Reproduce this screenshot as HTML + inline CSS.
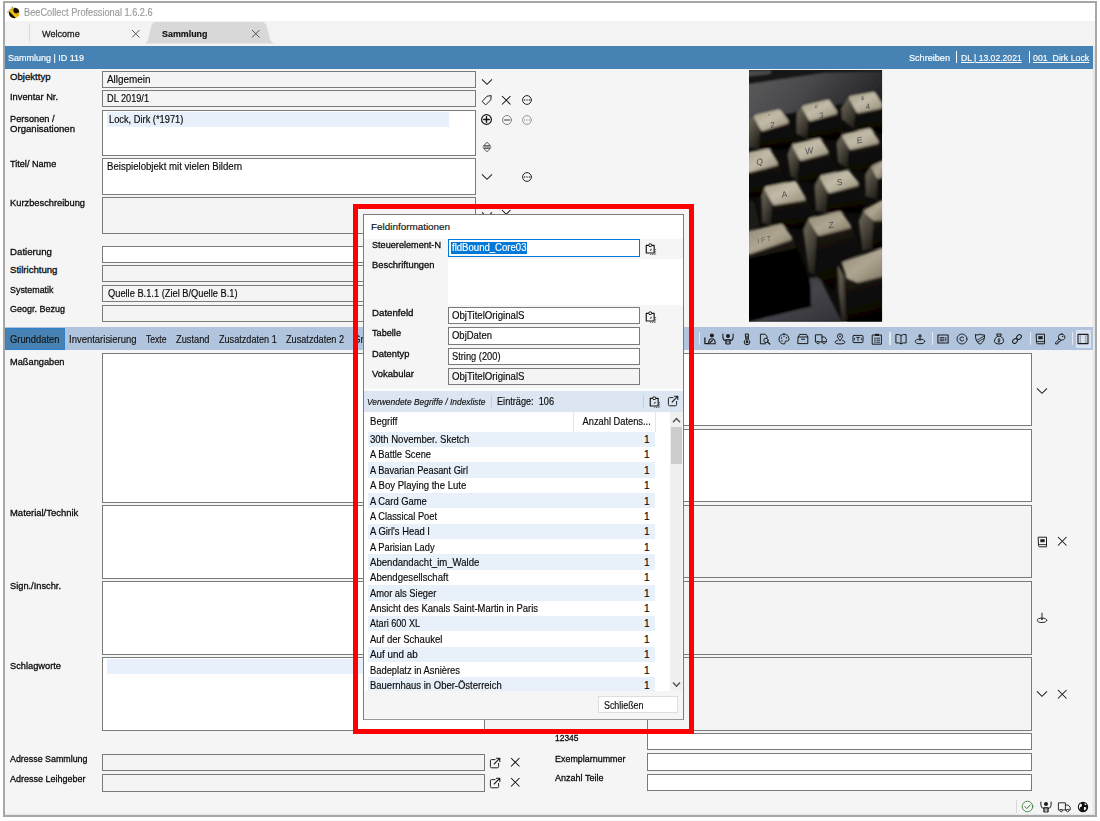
<!DOCTYPE html>
<html lang="de"><head><meta charset="utf-8"><title>BeeCollect Professional 1.6.2.6</title>
<style>

html,body{margin:0;padding:0;background:#fff;}
body{width:1100px;height:821px;overflow:hidden;font-family:"Liberation Sans",sans-serif;}
#app{position:relative;width:1100px;height:821px;overflow:hidden;}
#app div,#app span,#app svg{position:absolute;box-sizing:content-box;}
#app span{white-space:pre;-webkit-text-stroke:0.16px currentColor;}
#app span.lb{-webkit-text-stroke:0.29px currentColor;}
.b{font-weight:bold;}
.i{font-style:italic;}
.u{text-decoration:underline;}
svg{overflow:visible;}

</style></head>
<body>
<div id="app">
<div style="left:3.00px;top:1.00px;width:1090.00px;height:811.50px;background:#f5f5f5;border:2px solid #a9a6a6;box-shadow:inset -2px -1px 2px rgba(0,0,0,.07);"></div>
<div style="left:5.00px;top:3.00px;width:1089.50px;height:18.00px;background:#fff;"></div>
<div style="left:5.00px;top:21.00px;width:1089.50px;height:25.00px;background:#f3f3f3;"></div>
<div style="left:5.00px;top:46.00px;width:1087.50px;height:23.00px;background:#4682b4;"></div>
<svg style="left:7px;top:5.5px" width="14" height="14" viewBox="0 0 14 14"><defs><clipPath id="beec"><circle cx="7.2" cy="6.8" r="5.4"/></clipPath></defs><circle cx="7.2" cy="6.8" r="5.4" fill="#f2bf0a"/><g clip-path="url(#beec)"><g transform="rotate(-45 7.2 6.8)"><rect x="1.2" y="0" width="3.5" height="14" fill="#140e10"/><rect x="7.4" y="0" width="1" height="14" fill="#c79a10"/></g><circle cx="9.4" cy="4.2" r="3" fill="#140e10"/></g><path d="M5 3.6 Q2 3 0.9 5.6 M6.4 2.6 Q6 1.4 5 1" stroke="#aaa" stroke-width="0.8" fill="none"/><circle cx="0.9" cy="5.8" r="0.6" fill="#777"/><circle cx="5.2" cy="1" r="0.6" fill="#555"/></svg>
<span style="top:5.70px;font-size:10.4px;line-height:14px;color:#9a9a9a;left:24.00px;transform-origin:0 50%;transform:scaleX(0.8877);">BeeCollect Professional 1.6.2.6</span>
<div style="left:29.30px;top:23.00px;width:1.00px;height:19.00px;background:#dcdcdc;"></div>
<span class="lb" style="top:27.00px;font-size:9.6px;line-height:14px;color:#222;left:42.30px;transform-origin:0 50%;transform:scaleX(0.9469);">Welcome</span>
<svg style="left:131.25px;top:29.25px" width="9.5" height="9.5" viewBox="0 0 9.5 9.5"><path d="M1 1 L8.5 8.5 M8.5 1 L1 8.5" fill="none" stroke="#444" stroke-width="0.9"/></svg>
<svg style="left:140px;top:21px" width="140" height="24" viewBox="140 21 140 24"><path d="M143 43.6 C148 43.6 148.3 39 150 31 C151.4 24.4 152.2 22 156.5 22 L260.5 22 C265.5 22 266.5 24.5 268 31 C270 39 270.5 43.6 276 43.6 Z" fill="#d8d8d8"/></svg>
<span class="b" style="top:27.00px;font-size:9.6px;line-height:14px;color:#111;left:161.70px;transform-origin:0 50%;transform:scaleX(0.9277);">Sammlung</span>
<svg style="left:250.75px;top:29.25px" width="9.5" height="9.5" viewBox="0 0 9.5 9.5"><path d="M1 1 L8.5 8.5 M8.5 1 L1 8.5" fill="none" stroke="#444" stroke-width="0.9"/></svg>
<span style="top:51.00px;font-size:9.6px;line-height:14px;color:#fff;left:7.80px;transform-origin:0 50%;transform:scaleX(0.9356);">Sammlung | ID 119</span>
<span style="top:51.00px;font-size:9.6px;line-height:14px;color:#fff;left:909.00px;transform-origin:0 50%;transform:scaleX(0.9490);">Schreiben</span>
<div style="left:956.40px;top:50.50px;width:1.00px;height:12.50px;background:#fff;"></div>
<span class="u" style="top:51.00px;font-size:9.6px;line-height:14px;color:#fff;left:961.00px;transform-origin:0 50%;transform:scaleX(0.8959);">DL | 13.02.2021</span>
<div style="left:1028.60px;top:50.50px;width:1.00px;height:12.50px;background:#fff;"></div>
<span class="u" style="top:51.00px;font-size:9.6px;line-height:14px;color:#fff;left:1032.80px;transform-origin:0 50%;transform:scaleX(0.9164);">001_Dirk Lock</span>
<span class="lb" style="top:70.00px;font-size:9.6px;line-height:14px;color:#0a0a0a;left:10.00px;transform-origin:0 50%;">Objekttyp</span>
<div style="left:102.00px;top:71.00px;width:372.00px;height:15.00px;background:#f4f4f4;border:1px solid #7a7a7a;"></div>
<span class="lb" style="top:89.50px;font-size:9.6px;line-height:14px;color:#0a0a0a;left:10.00px;transform-origin:0 50%;transform:scaleX(0.9679);">Inventar Nr.</span>
<div style="left:102.00px;top:90.20px;width:372.00px;height:15.30px;background:#f4f4f4;border:1px solid #7a7a7a;"></div>
<span class="lb" style="top:112.30px;font-size:9.6px;line-height:14px;color:#0a0a0a;left:10.00px;transform-origin:0 50%;transform:scaleX(0.9589);">Personen /</span>
<div style="left:102.00px;top:110.00px;width:372.00px;height:44.00px;background:#fff;border:1px solid #7a7a7a;"></div>
<span class="lb" style="top:156.70px;font-size:9.6px;line-height:14px;color:#0a0a0a;left:10.00px;transform-origin:0 50%;transform:scaleX(0.9507);">Titel/ Name</span>
<div style="left:102.00px;top:158.00px;width:372.00px;height:35.00px;background:#fff;border:1px solid #7a7a7a;"></div>
<span class="lb" style="top:196.00px;font-size:9.6px;line-height:14px;color:#0a0a0a;left:10.00px;transform-origin:0 50%;transform:scaleX(0.9697);">Kurzbeschreibung</span>
<div style="left:102.00px;top:197.30px;width:372.00px;height:34.70px;background:#f4f4f4;border:1px solid #7a7a7a;"></div>
<span class="lb" style="top:245.00px;font-size:9.6px;line-height:14px;color:#0a0a0a;left:10.00px;transform-origin:0 50%;transform:scaleX(1.0094);">Datierung</span>
<div style="left:102.00px;top:246.00px;width:372.00px;height:15.00px;background:#fff;border:1px solid #7a7a7a;"></div>
<span class="lb" style="top:263.30px;font-size:9.6px;line-height:14px;color:#0a0a0a;left:10.00px;transform-origin:0 50%;">Stilrichtung</span>
<div style="left:102.00px;top:265.30px;width:372.00px;height:15.00px;background:#f4f4f4;border:1px solid #7a7a7a;"></div>
<span class="lb" style="top:282.50px;font-size:9.6px;line-height:14px;color:#0a0a0a;left:10.00px;transform-origin:0 50%;transform:scaleX(0.9271);">Systematik</span>
<div style="left:102.00px;top:284.80px;width:372.00px;height:15.20px;background:#f4f4f4;border:1px solid #7a7a7a;"></div>
<span class="lb" style="top:302.30px;font-size:9.6px;line-height:14px;color:#0a0a0a;left:10.00px;transform-origin:0 50%;transform:scaleX(0.9374);">Geogr. Bezug</span>
<div style="left:102.00px;top:304.50px;width:372.00px;height:15.00px;background:#f4f4f4;border:1px solid #7a7a7a;"></div>
<span class="lb" style="top:122.30px;font-size:9.6px;line-height:14px;color:#0a0a0a;left:10.00px;transform-origin:0 50%;transform:scaleX(0.9988);">Organisationen</span>
<div style="left:107.00px;top:112.00px;width:341.50px;height:14.50px;background:#e8f0fb;"></div>
<span style="top:73.00px;font-size:10.2px;line-height:14px;color:#0a0a0a;left:107.20px;transform-origin:0 50%;transform:scaleX(0.9721);">Allgemein</span>
<span style="top:92.30px;font-size:10.2px;line-height:14px;color:#0a0a0a;left:107.20px;transform-origin:0 50%;transform:scaleX(0.9005);">DL 2019/1</span>
<span style="top:112.50px;font-size:10.2px;line-height:14px;color:#0a0a0a;left:108.70px;transform-origin:0 50%;transform:scaleX(0.9113);">Lock, Dirk (*1971)</span>
<span style="top:160.00px;font-size:10.2px;line-height:14px;color:#0a0a0a;left:107.30px;transform-origin:0 50%;transform:scaleX(0.9437);">Beispielobjekt mit vielen Bildern</span>
<span style="top:287.00px;font-size:10.2px;line-height:14px;color:#0a0a0a;left:107.50px;transform-origin:0 50%;transform:scaleX(0.9112);">Quelle B.1.1 (Ziel B/Quelle B.1)</span>
<svg style="left:480.70px;top:77.50px" width="12" height="8" viewBox="0 0 12 8"><path d="M1 1.4 L6 6.3 L11 1.4" fill="none" stroke="#222" stroke-width="1.05"/></svg>
<svg style="left:480.50px;top:94.00px" width="12" height="12" viewBox="0 0 12 12"><path d="M1.4 7.2 L6 2.2 L10.2 1.6 L9.8 5.8 L5 10.6 Z" fill="none" stroke="#222" stroke-width="1.0" stroke-linecap="round" stroke-linejoin="round"/></svg>
<svg style="left:501.25px;top:94.75px" width="10.5" height="10.5" viewBox="0 0 10.5 10.5"><path d="M1 1 L9.5 9.5 M9.5 1 L1 9.5" fill="none" stroke="#151515" stroke-width="1.05"/></svg>
<svg style="left:520.70px;top:94.00px" width="12" height="12" viewBox="0 0 12 12"><circle cx="6" cy="6" r="4.4" fill="none" stroke="#222" stroke-width="1.0" stroke-linecap="round" stroke-linejoin="round"/><circle cx="3.7" cy="6" r="0.68" fill="#222"/><circle cx="6" cy="6" r="0.68" fill="#222"/><circle cx="8.3" cy="6" r="0.68" fill="#222"/></svg>
<svg style="left:480.20px;top:113.00px" width="13" height="13" viewBox="0 0 13 13"><circle cx="6.5" cy="6.5" r="4.9" fill="none" stroke="#111" stroke-width="1.15" stroke-linecap="round" stroke-linejoin="round"/><path d="M3.7 6.5 H9.3 M6.5 3.7 V9.3" fill="none" stroke="#111" stroke-width="1.4" stroke-linecap="round" stroke-linejoin="round"/></svg>
<svg style="left:500.50px;top:113.50px" width="12" height="12" viewBox="0 0 12 12"><circle cx="6" cy="6" r="4.5" fill="none" stroke="#777" stroke-width="0.9" stroke-linecap="round" stroke-linejoin="round"/><path d="M3.4 6 H8.6" fill="none" stroke="#777" stroke-width="1.4" stroke-linecap="round" stroke-linejoin="round"/></svg>
<svg style="left:520.70px;top:113.50px" width="12" height="12" viewBox="0 0 12 12"><circle cx="6" cy="6" r="4.4" fill="none" stroke="#999" stroke-width="1.0" stroke-linecap="round" stroke-linejoin="round"/><circle cx="3.7" cy="6" r="0.68" fill="#999"/><circle cx="6" cy="6" r="0.68" fill="#999"/><circle cx="8.3" cy="6" r="0.68" fill="#999"/></svg>
<svg style="left:481.70px;top:140.50px" width="10" height="12" viewBox="0 0 10 12"><path d="M2 4.3 L5 1.2 L8 4.3 Z M1 6 H9 M2 7.7 L5 10.8 L8 7.7 Z" fill="none" stroke="#222" stroke-width="0.75" stroke-linecap="round" stroke-linejoin="round"/></svg>
<svg style="left:480.70px;top:173.00px" width="12" height="8" viewBox="0 0 12 8"><path d="M1 1.4 L6 6.3 L11 1.4" fill="none" stroke="#222" stroke-width="1.05"/></svg>
<svg style="left:520.70px;top:170.70px" width="12" height="12" viewBox="0 0 12 12"><circle cx="6" cy="6" r="4.4" fill="none" stroke="#222" stroke-width="1.0" stroke-linecap="round" stroke-linejoin="round"/><circle cx="3.7" cy="6" r="0.68" fill="#222"/><circle cx="6" cy="6" r="0.68" fill="#222"/><circle cx="8.3" cy="6" r="0.68" fill="#222"/></svg>
<svg style="left:480.70px;top:210.50px" width="12" height="8" viewBox="0 0 12 8"><path d="M1 1.4 L6 6.3 L11 1.4" fill="none" stroke="#222" stroke-width="1.05"/></svg>
<svg style="left:501.25px;top:208.75px" width="10.5" height="10.5" viewBox="0 0 10.5 10.5"><path d="M1 1 L9.5 9.5 M9.5 1 L1 9.5" fill="none" stroke="#151515" stroke-width="1.05"/></svg>
<svg style="left:749.3px;top:70.3px" width="133.1" height="251.7" viewBox="0 0 133.1 251.7" preserveAspectRatio="none"><defs>
<linearGradient id="kt" x1="0" y1="0" x2="1" y2="1"><stop offset="0" stop-color="#a9a18c"/><stop offset="0.45" stop-color="#c2bba8"/><stop offset="1" stop-color="#9b937e"/></linearGradient>
<linearGradient id="kt2" x1="0" y1="0" x2="1" y2="1"><stop offset="0" stop-color="#948c78"/><stop offset="0.5" stop-color="#aea691"/><stop offset="1" stop-color="#857d69"/></linearGradient>
<linearGradient id="kl" x1="0" y1="0" x2="0.6" y2="1"><stop offset="0" stop-color="#716b5a"/><stop offset="0.5" stop-color="#4f4a40"/><stop offset="1" stop-color="#26231d"/></linearGradient>
<linearGradient id="kf" x1="0" y1="0" x2="0.2" y2="1"><stop offset="0" stop-color="#2a241c"/><stop offset="0.35" stop-color="#120f0b"/><stop offset="1" stop-color="#050403"/></linearGradient>
<linearGradient id="cs" x1="0" y1="0" x2="1" y2="0.4"><stop offset="0" stop-color="#5e5e60"/><stop offset="0.45" stop-color="#4b4b4e"/><stop offset="0.8" stop-color="#323234"/><stop offset="1" stop-color="#232325"/></linearGradient>
<linearGradient id="cb" x1="0" y1="0" x2="1" y2="1"><stop offset="0" stop-color="#2e2e32"/><stop offset="0.5" stop-color="#45454b"/><stop offset="1" stop-color="#303035"/></linearGradient>
<filter id="bl" x="-5%" y="-5%" width="110%" height="110%"><feGaussianBlur stdDeviation="0.9"/></filter>
<filter id="bl2" x="-20%" y="-20%" width="140%" height="140%"><feGaussianBlur stdDeviation="0.35"/></filter>
<clipPath id="pc"><rect x="0" y="0" width="133.1" height="251.7"/></clipPath>
</defs><g clip-path="url(#pc)"><rect x="0" y="0" width="133.1" height="251.7" fill="#0d0c0a"/><g filter="url(#bl)"><polygon points="-4.3,-4.3 138.2,-4.3 138.2,36.9 -4.3,55.9" fill="url(#cs)"/><polygon points="-4.3,-4.3 138.2,-4.3 138.2,1.1 74.9,3.0 -4.3,14.7" fill="#141414"/><polygon points="-1.1,0.5 22.6,0.5 21.1,4.0 -1.1,6.5" fill="#4c4c4c"/><polygon points="-4.3,51.4 93.9,33.7 138.2,27.4 138.2,43.2 -4.3,62.2" fill="#0f0e0c"/><polygon points="106.5,42.0 135.0,36.1 135.0,63.8 105.0,59.0" fill="url(#kf)"/><polygon points="99.4,27.4 106.5,42.0 105.0,59.0 93.1,49.5 92.3,38.5" fill="url(#kl)"/><polygon points="103.2,29.2 125.1,25.6 131.2,35.1 131.3,36.7 109.8,41.2" fill="#5f594a" stroke="#5f594a" stroke-width="5.0" stroke-linejoin="round"/><polygon points="102.4,28.1 124.3,24.5 130.4,34.0 130.5,35.7 109.1,40.1" fill="url(#kt)" stroke="url(#kt)" stroke-width="5.0" stroke-linejoin="round"/><polygon points="59.4,50.3 88.3,42.0 94.7,59.0 90.7,70.1 58.3,68.5" fill="url(#kf)"/><polygon points="52.4,37.2 59.4,50.3 58.3,68.5 47.2,63.8 48.0,43.2" fill="url(#kl)"/><polygon points="56.3,38.7 79.7,33.3 86.0,42.6 62.4,49.2" fill="#5f594a" stroke="#5f594a" stroke-width="5.0" stroke-linejoin="round"/><polygon points="55.5,37.7 78.9,32.3 85.3,41.6 61.6,48.2" fill="url(#kt)" stroke="url(#kt)" stroke-width="5.0" stroke-linejoin="round"/><polygon points="11.2,60.3 39.7,51.4 45.1,65.4 43.2,79.6 10.0,79.6" fill="url(#kf)"/><polygon points="-1.1,51.1 4.4,46.7 11.2,60.3 10.0,78.0 -1.1,78.0" fill="url(#kl)"/><polygon points="8.3,48.2 30.4,42.9 37.4,52.2 14.2,59.1" fill="#5f594a" stroke="#5f594a" stroke-width="5.0" stroke-linejoin="round"/><polygon points="7.5,47.2 29.6,41.9 36.7,51.1 13.4,58.1" fill="url(#kt)" stroke="url(#kt)" stroke-width="5.0" stroke-linejoin="round"/><polygon points="99.4,78.8 130.3,71.4 135.0,81.2 135.0,106.5 98.6,98.6" fill="url(#kf)"/><polygon points="92.6,65.7 99.4,78.8 98.6,98.6 89.1,92.3 87.5,73.3" fill="url(#kl)"/><polygon points="96.5,67.2 120.8,61.8 128.0,72.0 102.5,77.8" fill="#5f594a" stroke="#5f594a" stroke-width="5.0" stroke-linejoin="round"/><polygon points="95.7,66.2 120.0,60.8 127.2,71.0 101.8,76.8" fill="url(#kt)" stroke="url(#kt)" stroke-width="5.0" stroke-linejoin="round"/><polygon points="49.9,89.9 79.6,81.5 87.5,98.6 84.4,116.0 48.8,109.7" fill="url(#kf)"/><polygon points="42.9,75.2 49.9,89.9 48.8,109.7 41.6,106.5 38.5,84.4" fill="url(#kl)"/><polygon points="46.7,76.8 70.6,71.7 77.4,82.1 52.9,88.8" fill="#5f594a" stroke="#5f594a" stroke-width="5.0" stroke-linejoin="round"/><polygon points="45.9,75.8 69.8,70.7 76.6,81.1 52.1,87.7" fill="url(#kt)" stroke="url(#kt)" stroke-width="5.0" stroke-linejoin="round"/><polygon points="-1.9,101.8 29.3,93.6 38.5,112.9 35.3,127.1 -1.9,127.1" fill="url(#kf)"/><polygon points="1.7,85.2 19.8,82.2 27.1,93.9 1.2,100.7" fill="#5f594a" stroke="#5f594a" stroke-width="5.0" stroke-linejoin="round"/><polygon points="0.9,84.1 19.0,81.1 26.3,92.8 0.4,99.7" fill="url(#kt)" stroke="url(#kt)" stroke-width="5.0" stroke-linejoin="round"/><polygon points="122.4,95.8 129.0,109.1 127.9,129.5 116.8,126.3 116.0,105.0" fill="url(#kl)"/><polygon points="125.8,98.4 134.5,94.5 134.0,105.4 130.3,107.0" fill="#5f594a" stroke="#5f594a" stroke-width="5.0" stroke-linejoin="round"/><polygon points="125.0,97.4 133.7,93.5 133.2,104.4 129.5,106.0" fill="url(#kt2)" stroke="url(#kt2)" stroke-width="5.0" stroke-linejoin="round"/><polygon points="78.4,122.4 110.0,113.7 117.6,130.3 112.9,142.9 77.3,142.9" fill="url(#kf)"/><polygon points="70.4,106.9 78.4,122.4 77.3,142.9 67.0,140.6 65.4,116.0" fill="url(#kl)"/><polygon points="74.3,108.5 98.8,103.4 107.7,114.3 81.3,121.2" fill="#5f594a" stroke="#5f594a" stroke-width="5.0" stroke-linejoin="round"/><polygon points="73.5,107.5 98.0,102.4 107.0,113.2 80.5,120.2" fill="url(#kt)" stroke="url(#kt)" stroke-width="5.0" stroke-linejoin="round"/><polygon points="23.0,134.4 56.7,128.7 67.0,144.5 59.0,160.4 21.8,155.6" fill="url(#kf)"/><polygon points="15.0,117.9 23.0,134.4 21.8,155.6 13.1,152.4 12.3,127.1" fill="url(#kl)"/><polygon points="18.8,119.7 46.2,114.5 54.5,128.9 26.1,133.4" fill="#5f594a" stroke="#5f594a" stroke-width="5.0" stroke-linejoin="round"/><polygon points="18.0,118.7 45.4,113.5 53.7,127.9 25.3,132.3" fill="url(#kt)" stroke="url(#kt)" stroke-width="5.0" stroke-linejoin="round"/><polygon points="-1.9,128.7 5.2,131.9 10.8,155.6 -1.9,160.4" fill="#1c1a15"/><polygon points="60.6,208.0 70.1,206.7 93.1,252.3 -1.9,252.3 -1.9,246.0 62.2,236.5" fill="url(#cb)"/><polygon points="124.3,151.0 135.0,149.4 135.0,177.9 123.2,178.7" fill="url(#kf)"/><polygon points="114.5,140.7 124.3,151.0 123.2,178.7 113.7,181.1 109.7,151.0" fill="url(#kl)"/><polygon points="118.3,142.3 134.2,133.8 133.5,148.5 126.1,149.1" fill="#5f594a" stroke="#5f594a" stroke-width="5.0" stroke-linejoin="round"/><polygon points="117.5,141.2 133.4,132.8 132.7,147.4 125.3,148.1" fill="url(#kt2)" stroke="url(#kt2)" stroke-width="5.0" stroke-linejoin="round"/><polygon points="67.8,165.0 102.1,156.1 113.7,182.7 90.7,193.8 84.4,220.7 65.4,204.8" fill="url(#kf)"/><polygon points="59.0,149.8 67.8,165.0 65.4,204.8 59.8,201.7 54.3,160.5" fill="url(#kl)"/><polygon points="62.9,151.3 91.1,144.7 99.8,156.7 70.8,163.9" fill="#5f594a" stroke="#5f594a" stroke-width="5.0" stroke-linejoin="round"/><polygon points="62.1,150.2 90.4,143.7 99.0,155.7 70.0,162.8" fill="url(#kt2)" stroke="url(#kt2)" stroke-width="5.0" stroke-linejoin="round"/><polygon points="-1.9,183.0 43.2,167.6 60.6,208.0 62.2,236.5 -1.9,252.3" fill="url(#kf)"/><polygon points="1.9,164.1 32.8,157.4 40.9,168.6 1.3,182.1" fill="#5f594a" stroke="#5f594a" stroke-width="5.0" stroke-linejoin="round"/><polygon points="1.1,163.1 32.1,156.4 40.1,167.5 0.5,181.1" fill="url(#kt2)" stroke="url(#kt2)" stroke-width="5.0" stroke-linejoin="round"/><polygon points="-1.9,189.0 48.0,177.9 61.4,214.3 62.2,236.5 -1.9,250.8" fill="#050404"/><polygon points="105.0,211.2 135.0,204.8 135.0,252.3 97.8,252.3 94.7,204.8" fill="url(#kf)"/><polygon points="89.1,195.3 94.7,204.8 97.8,249.2 93.1,252.3 89.4,220.7" fill="url(#kl)"/><polygon points="96.4,194.9 133.6,181.9 132.8,204.8 109.4,210.7 100.6,206.9" fill="#5f594a" stroke="#5f594a" stroke-width="5.0" stroke-linejoin="round"/><polygon points="95.6,193.9 132.8,180.9 132.0,203.8 108.6,209.6 99.8,205.9" fill="url(#kt2)" stroke="url(#kt2)" stroke-width="5.0" stroke-linejoin="round"/></g><g filter="url(#bl2)"><text x="0" y="2.7" font-family="Liberation Sans,sans-serif" font-size="7.6" fill="#3c3c44" text-anchor="middle" letter-spacing="0" transform="translate(23.4 54.6) rotate(-12) skewX(-8)" opacity="0.85">2</text><text x="0" y="1.9" font-family="Liberation Sans,sans-serif" font-size="5.5" fill="#3c3c44" text-anchor="middle" letter-spacing="0" transform="translate(20.3 46.1) rotate(-12) skewX(-8)" opacity="0.85">&quot;</text><text x="0" y="2.7" font-family="Liberation Sans,sans-serif" font-size="7.6" fill="#3c3c44" text-anchor="middle" letter-spacing="0" transform="translate(72.5 45.1) rotate(-12) skewX(-8)" opacity="0.85">3</text><text x="0" y="1.9" font-family="Liberation Sans,sans-serif" font-size="5.5" fill="#3c3c44" text-anchor="middle" letter-spacing="0" transform="translate(67.3 36.6) rotate(-12) skewX(-8)" opacity="0.85">#</text><text x="0" y="2.7" font-family="Liberation Sans,sans-serif" font-size="7.6" fill="#3c3c44" text-anchor="middle" letter-spacing="0" transform="translate(118.9 36.4) rotate(-12) skewX(-8)" opacity="0.85">4</text><text x="0" y="1.9" font-family="Liberation Sans,sans-serif" font-size="5.5" fill="#3c3c44" text-anchor="middle" letter-spacing="0" transform="translate(113.7 28.2) rotate(-12) skewX(-8)" opacity="0.85">$</text><text x="0" y="3.0" font-family="Liberation Sans,sans-serif" font-size="8.6" fill="#3c3c44" text-anchor="middle" letter-spacing="0" transform="translate(110.5 70.1) rotate(-12) skewX(-8)" opacity="0.85">E</text><text x="0" y="3.0" font-family="Liberation Sans,sans-serif" font-size="8.6" fill="#3c3c44" text-anchor="middle" letter-spacing="0" transform="translate(60.3 80.6) rotate(-12) skewX(-8)" opacity="0.85">W</text><text x="0" y="3.0" font-family="Liberation Sans,sans-serif" font-size="8.6" fill="#3c3c44" text-anchor="middle" letter-spacing="0" transform="translate(10.8 91.7) rotate(-10) skewX(-8)" opacity="0.85">Q</text><text x="0" y="3.0" font-family="Liberation Sans,sans-serif" font-size="8.6" fill="#3c3c44" text-anchor="middle" letter-spacing="0" transform="translate(90.7 112.2) rotate(-12) skewX(-8)" opacity="0.85">S</text><text x="0" y="3.0" font-family="Liberation Sans,sans-serif" font-size="8.6" fill="#3c3c44" text-anchor="middle" letter-spacing="0" transform="translate(35.3 124.3) rotate(-12) skewX(-8)" opacity="0.85">A</text><text x="0" y="3.0" font-family="Liberation Sans,sans-serif" font-size="8.6" fill="#3c3c44" text-anchor="middle" letter-spacing="0" transform="translate(82.0 155.0) rotate(-12) skewX(-8)" opacity="0.85">Z</text><text x="0" y="2.4" font-family="Liberation Sans,sans-serif" font-size="7" fill="#55534e" text-anchor="middle" letter-spacing="1.8" transform="translate(16.0 169.5) rotate(-13) skewX(-8)" opacity="0.85">IFT</text></g></g></svg>
<div style="left:5.00px;top:327.00px;width:1087.50px;height:23.00px;background:#b0c4de;"></div>
<div style="left:5.00px;top:328.00px;width:60.00px;height:22.00px;background:#4682b4;box-shadow:inset 0 0 0 1px #2f80cf;"></div>
<span style="top:332.50px;font-size:10.2px;line-height:14px;color:#141414;left:10.00px;transform-origin:0 50%;transform:scaleX(0.9199);">Grunddaten</span>
<span style="top:332.50px;font-size:10.2px;line-height:14px;color:#141414;left:69.00px;transform-origin:0 50%;transform:scaleX(0.9310);">Inventarisierung</span>
<span style="top:332.50px;font-size:10.2px;line-height:14px;color:#141414;left:146.00px;transform-origin:0 50%;transform:scaleX(0.8416);">Texte</span>
<span style="top:332.50px;font-size:10.2px;line-height:14px;color:#141414;left:175.50px;transform-origin:0 50%;transform:scaleX(0.9100);">Zustand</span>
<span style="top:332.50px;font-size:10.2px;line-height:14px;color:#141414;left:218.60px;transform-origin:0 50%;transform:scaleX(0.8937);">Zusatzdaten 1</span>
<span style="top:332.50px;font-size:10.2px;line-height:14px;color:#141414;left:285.70px;transform-origin:0 50%;transform:scaleX(0.8984);">Zusatzdaten 2</span>
<span style="top:332.50px;font-size:10.2px;line-height:14px;color:#141414;left:352.50px;transform-origin:0 50%;transform:scaleX(0.9569);">Grafik</span>
<div style="left:698.60px;top:332.20px;width:1.2px;height:13px;background:#e4e9f1"></div>
<svg style="left:704.00px;top:332.80px" width="12" height="12" viewBox="0 0 12 12"><circle cx="7.9" cy="2.5" r="2" fill="#1c1c1c"/><path d="M4.6 10.7 Q4.6 5.8 7.9 5.8 Q11.2 5.8 11.2 10.7 Z" fill="none" stroke="#1c1c1c" stroke-width="1.1" stroke-linecap="round" stroke-linejoin="round"/><path d="M5.8 9.4 L8.4 7.4" fill="none" stroke="#1c1c1c" stroke-width="1.2" stroke-linecap="round" stroke-linejoin="round"/><path d="M0.9 5 V10.6 H4.4" fill="none" stroke="#1c1c1c" stroke-width="1.3" stroke-linecap="round" stroke-linejoin="round"/></svg>
<svg style="left:722.40px;top:332.80px" width="12" height="12" viewBox="0 0 12 12"><circle cx="6" cy="2.9" r="2" fill="#1c1c1c"/><path d="M0.9 1 V4.4 Q1 7 3.8 7.6 M11.1 1 V4.4 Q11 7 8.2 7.6" fill="none" stroke="#1c1c1c" stroke-width="1.1" stroke-linecap="round" stroke-linejoin="round"/><path d="M3.8 6.6 H8.2 V11 H3.8 Z" fill="#1c1c1c" fill-opacity="0.55" stroke="#1c1c1c" stroke-width="0.9"/><path d="M6 8 V11" stroke="#b0c4de" stroke-width="0.8"/></svg>
<svg style="left:740.80px;top:332.80px" width="12" height="12" viewBox="0 0 12 12"><path d="M4.6 1 H7.4 V6.6 Q8.8 7.6 8.8 9 A2.8 2.8 0 0 1 3.2 9 Q3.2 7.6 4.6 6.6 Z" fill="none" stroke="#1c1c1c" stroke-width="1.0" stroke-linecap="round" stroke-linejoin="round"/><circle cx="6" cy="9" r="1.3" fill="#1c1c1c"/><path d="M6 3 V8" fill="none" stroke="#1c1c1c" stroke-width="1.2" stroke-linecap="round" stroke-linejoin="round"/></svg>
<svg style="left:759.30px;top:332.80px" width="12" height="12" viewBox="0 0 12 12"><path d="M6.6 10.8 H1.4 V1.2 H6 L8 3.2 V5" fill="none" stroke="#1c1c1c" stroke-width="1.0" stroke-linecap="round" stroke-linejoin="round"/><circle cx="7" cy="7.4" r="2.2" fill="none" stroke="#1c1c1c" stroke-width="1.0" stroke-linecap="round" stroke-linejoin="round"/><path d="M8.6 9 L10.8 11" fill="none" stroke="#1c1c1c" stroke-width="1.2" stroke-linecap="round" stroke-linejoin="round"/></svg>
<svg style="left:778.10px;top:332.80px" width="12" height="12" viewBox="0 0 12 12"><path d="M6 1 A5 5 0 1 0 6 11 Q7.4 11 7 9.6 Q6.6 8.2 8 8 H9.6 Q11 8 11 6 A5 5 0 0 0 6 1 Z" fill="none" stroke="#1c1c1c" stroke-width="1.0" stroke-linecap="round" stroke-linejoin="round"/><circle cx="3.6" cy="5" r="0.7" fill="#1c1c1c"/><circle cx="6" cy="3.3" r="0.7" fill="#1c1c1c"/><circle cx="8.5" cy="4.8" r="0.7" fill="#1c1c1c"/><circle cx="4" cy="7.8" r="0.7" fill="#1c1c1c"/></svg>
<svg style="left:796.80px;top:332.80px" width="12" height="12" viewBox="0 0 12 12"><path d="M1.2 4 L2.6 1.4 H9.4 L10.8 4 V10.6 H1.2 Z M1.2 4 H10.8 M4.4 6.2 H7.6" fill="none" stroke="#1c1c1c" stroke-width="1.0" stroke-linecap="round" stroke-linejoin="round"/></svg>
<svg style="left:815.40px;top:332.80px" width="12" height="12" viewBox="0 0 12 12"><path d="M0.8 1.8 H7 V9 H0.8 Z M7 4 H9.6 L11.4 6.4 V9 H7" fill="none" stroke="#1c1c1c" stroke-width="1.0" stroke-linecap="round" stroke-linejoin="round"/><circle cx="3" cy="9.6" r="1.2" fill="#b0c4de" stroke="#1c1c1c" stroke-width="0.9"/><circle cx="9" cy="9.6" r="1.2" fill="#b0c4de" stroke="#1c1c1c" stroke-width="0.9"/></svg>
<svg style="left:833.90px;top:332.80px" width="12" height="12" viewBox="0 0 12 12"><path d="M6 7.6 Q3.4 4.8 3.4 3.4 A2.6 2.6 0 0 1 8.6 3.4 Q8.6 4.8 6 7.6 Z" fill="none" stroke="#1c1c1c" stroke-width="1.0" stroke-linecap="round" stroke-linejoin="round"/><circle cx="6" cy="3.4" r="0.8" fill="#1c1c1c"/><path d="M3.4 7.4 Q1 8 1 9.2 Q1 11 6 11 Q11 11 11 9.2 Q11 8 8.6 7.4" fill="none" stroke="#1c1c1c" stroke-width="1.0" stroke-linecap="round" stroke-linejoin="round"/></svg>
<svg style="left:852.20px;top:332.80px" width="12" height="12" viewBox="0 0 12 12"><rect x="1" y="2.4" width="10" height="7.2" rx="1" fill="none" stroke="#1c1c1c" stroke-width="1.0" stroke-linecap="round" stroke-linejoin="round"/><path d="M4.6 4.4 H7.4 M6 4.4 V7.8" fill="none" stroke="#1c1c1c" stroke-width="0.9" stroke-linecap="round" stroke-linejoin="round"/><path d="M2.6 5.2 V6.8 M9.4 5.2 V6.8" fill="none" stroke="#1c1c1c" stroke-width="0.8" stroke-linecap="round" stroke-linejoin="round"/></svg>
<svg style="left:870.80px;top:332.80px" width="12" height="12" viewBox="0 0 12 12"><rect x="1.6" y="2" width="8.8" height="9.2" fill="none" stroke="#1c1c1c" stroke-width="1.0" stroke-linecap="round" stroke-linejoin="round"/><rect x="4" y="0.8" width="4" height="2.2" fill="#1c1c1c"/><path d="M3.4 5.2 H4.4 M5.8 5.2 H8.6 M3.4 7.2 H4.4 M5.8 7.2 H8.6 M3.4 9.2 H4.4 M5.8 9.2 H8.6" fill="none" stroke="#1c1c1c" stroke-width="0.9" stroke-linecap="round" stroke-linejoin="round"/></svg>
<div style="left:889.40px;top:332.20px;width:1.2px;height:13px;background:#e4e9f1"></div>
<svg style="left:894.90px;top:332.80px" width="12" height="12" viewBox="0 0 12 12"><path d="M6 2.4 Q3.6 1 0.9 1.6 V10 Q3.6 9.4 6 10.8 Q8.4 9.4 11.1 10 V1.6 Q8.4 1 6 2.4 V10.8" fill="none" stroke="#1c1c1c" stroke-width="1.0" stroke-linecap="round" stroke-linejoin="round"/></svg>
<svg style="left:913.60px;top:332.80px" width="12" height="12" viewBox="0 0 12 12"><path d="M6 1.4 V7.4 M4.4 3 H7.6" fill="none" stroke="#1c1c1c" stroke-width="1.1" stroke-linecap="round" stroke-linejoin="round"/><ellipse cx="6" cy="8.4" rx="4.7" ry="2.3" fill="none" stroke="#1c1c1c" stroke-width="1.0" stroke-linecap="round" stroke-linejoin="round"/></svg>
<div style="left:931.80px;top:332.20px;width:1.2px;height:13px;background:#e4e9f1"></div>
<svg style="left:936.60px;top:332.80px" width="12" height="12" viewBox="0 0 12 12"><rect x="0.9" y="2" width="10.2" height="8" fill="none" stroke="#1c1c1c" stroke-width="1.1" stroke-linecap="round" stroke-linejoin="round"/><path d="M3 4.6 H7 M3 6.2 H7 M3 7.8 H7 M8.8 4.6 V7.8" fill="none" stroke="#1c1c1c" stroke-width="0.9" stroke-linecap="round" stroke-linejoin="round"/></svg>
<svg style="left:955.60px;top:332.80px" width="12" height="12" viewBox="0 0 12 12"><circle cx="6" cy="6" r="5" fill="none" stroke="#1c1c1c" stroke-width="0.9" stroke-linecap="round" stroke-linejoin="round"/><path d="M7.6 4.6 A2.1 2.1 0 1 0 7.6 7.4" fill="none" stroke="#1c1c1c" stroke-width="1.0" stroke-linecap="round" stroke-linejoin="round"/></svg>
<svg style="left:973.80px;top:332.80px" width="12" height="12" viewBox="0 0 12 12"><path d="M1.4 2 Q6 2 6 1 Q6 2 10.6 2 Q10.8 8.6 6 11.2 Q1.2 8.6 1.4 2 Z" fill="none" stroke="#1c1c1c" stroke-width="1.0" stroke-linecap="round" stroke-linejoin="round"/><path d="M2.6 7.4 L9.6 3.4 M3.6 9 L10 5.4" fill="none" stroke="#1c1c1c" stroke-width="0.8" stroke-linecap="round" stroke-linejoin="round"/></svg>
<svg style="left:992.80px;top:332.80px" width="12" height="12" viewBox="0 0 12 12"><path d="M4.4 3.2 L3.6 1 H8.4 L7.6 3.2 Q11 5.4 10.6 8.6 Q10.2 11 6 11 Q1.8 11 1.4 8.6 Q1 5.4 4.4 3.2 Z M4.4 3.2 H7.6" fill="none" stroke="#1c1c1c" stroke-width="1.0" stroke-linecap="round" stroke-linejoin="round"/><path d="M6 5.2 V9.6 M7 6.2 Q5 5.6 5 6.8 Q5 7.4 6 7.4 Q7 7.4 7 8.2 Q7 9.2 5 8.6" fill="none" stroke="#1c1c1c" stroke-width="0.7" stroke-linecap="round" stroke-linejoin="round"/></svg>
<svg style="left:1011.30px;top:332.80px" width="12" height="12" viewBox="0 0 12 12"><rect x="-2.6" y="-1.9" width="5.2" height="3.8" rx="1.9" transform="translate(4 8) rotate(-45)" fill="none" stroke="#1c1c1c" stroke-width="1.0" stroke-linecap="round" stroke-linejoin="round"/><rect x="-2.6" y="-1.9" width="5.2" height="3.8" rx="1.9" transform="translate(8 4) rotate(-45)" fill="none" stroke="#1c1c1c" stroke-width="1.0" stroke-linecap="round" stroke-linejoin="round"/></svg>
<div style="left:1029.70px;top:332.20px;width:1.2px;height:13px;background:#e4e9f1"></div>
<svg style="left:1035.30px;top:332.80px" width="11" height="12" viewBox="0 0 11 12"><path d="M1.5 1.2 H9.5 V10.8 H2.7 Q1.5 10.8 1.5 9.6 Z" fill="none" stroke="#1c1c1c" stroke-width="1.0" stroke-linecap="round" stroke-linejoin="round"/><path d="M1.6 8.6 H9.4" fill="none" stroke="#1c1c1c" stroke-width="0.9" stroke-linecap="round" stroke-linejoin="round"/><rect x="3.3" y="3.2" width="4.4" height="3" fill="#1c1c1c"/></svg>
<svg style="left:1053.50px;top:332.80px" width="12" height="12" viewBox="0 0 12 12"><path d="M7.9 1 A3.1 3.1 0 1 1 5.3 5.9 L1.6 9.6 V11 H3.6 V9.8 H4.8 V8.6 H6 L6.9 7.2 A3.1 3.1 0 0 1 7.9 1 Z" fill="none" stroke="#1c1c1c" stroke-width="0.95" stroke-linecap="round" stroke-linejoin="round"/><circle cx="8.6" cy="3.4" r="0.7" fill="#1c1c1c"/></svg>
<div style="left:1071.70px;top:332.20px;width:1.2px;height:13px;background:#e4e9f1"></div>
<div style="left:1075.5px;top:330.20px;width:15px;height:17.4px;background:#d7e1ef"></div>
<svg style="left:1076.90px;top:332.80px" width="12" height="12" viewBox="0 0 12 12"><rect x="1" y="1.4" width="10" height="9.2" fill="none" stroke="#1c1c1c" stroke-width="1.1" stroke-linecap="round" stroke-linejoin="round"/><path d="M3.2 1.4 V10.6 M8.8 1.4 V10.6" fill="none" stroke="#1c1c1c" stroke-width="0.8" stroke-dasharray="1 1"/></svg>
<span class="lb" style="top:354.70px;font-size:9.6px;line-height:14px;color:#0a0a0a;left:10.00px;transform-origin:0 50%;transform:scaleX(0.9638);">Maßangaben</span>
<div style="left:102.00px;top:352.50px;width:381.00px;height:148.00px;background:#fff;border:1px solid #7a7a7a;"></div>
<span class="lb" style="top:506.20px;font-size:9.6px;line-height:14px;color:#0a0a0a;left:10.00px;transform-origin:0 50%;transform:scaleX(0.9852);">Material/Technik</span>
<div style="left:102.00px;top:504.50px;width:381.00px;height:72.00px;background:#fff;border:1px solid #7a7a7a;"></div>
<span class="lb" style="top:579.00px;font-size:9.6px;line-height:14px;color:#0a0a0a;left:10.00px;transform-origin:0 50%;transform:scaleX(0.9660);">Sign./Inschr.</span>
<div style="left:102.00px;top:581.00px;width:381.00px;height:71.50px;background:#fff;border:1px solid #7a7a7a;"></div>
<span class="lb" style="top:658.70px;font-size:9.6px;line-height:14px;color:#0a0a0a;left:10.00px;transform-origin:0 50%;transform:scaleX(0.9660);">Schlagworte</span>
<div style="left:102.00px;top:656.50px;width:381.00px;height:72.00px;background:#fff;border:1px solid #7a7a7a;"></div>
<span class="lb" style="top:752.00px;font-size:9.6px;line-height:14px;color:#0a0a0a;left:10.00px;transform-origin:0 50%;transform:scaleX(0.9257);">Adresse Sammlung</span>
<div style="left:102.00px;top:753.50px;width:381.00px;height:15.20px;background:#f4f4f4;border:1px solid #7a7a7a;"></div>
<span class="lb" style="top:772.30px;font-size:9.6px;line-height:14px;color:#0a0a0a;left:10.00px;transform-origin:0 50%;transform:scaleX(0.9373);">Adresse Leihgeber</span>
<div style="left:102.00px;top:774.00px;width:381.00px;height:15.50px;background:#f4f4f4;border:1px solid #7a7a7a;"></div>
<div style="left:107.00px;top:659.00px;width:373.00px;height:14.50px;background:#e8f0fb;"></div>
<svg style="left:489.30px;top:756.50px" width="12" height="12" viewBox="0 0 12 12"><path d="M6 2.6 H2.6 Q1.4 2.6 1.4 3.8 V9.6 Q1.4 10.8 2.6 10.8 H8.4 Q9.6 10.8 9.6 9.6 V6.4" fill="none" stroke="#222" stroke-width="1.0" stroke-linecap="round" stroke-linejoin="round"/><path d="M5.2 7 L10.6 1.4 M7.4 1.2 H10.8 V4.6" fill="none" stroke="#222" stroke-width="1.1" stroke-linecap="round" stroke-linejoin="round"/></svg>
<svg style="left:510.45px;top:757.25px" width="10.5" height="10.5" viewBox="0 0 10.5 10.5"><path d="M1 1 L9.5 9.5 M9.5 1 L1 9.5" fill="none" stroke="#151515" stroke-width="1.05"/></svg>
<svg style="left:489.30px;top:776.70px" width="12" height="12" viewBox="0 0 12 12"><path d="M6 2.6 H2.6 Q1.4 2.6 1.4 3.8 V9.6 Q1.4 10.8 2.6 10.8 H8.4 Q9.6 10.8 9.6 9.6 V6.4" fill="none" stroke="#222" stroke-width="1.0" stroke-linecap="round" stroke-linejoin="round"/><path d="M5.2 7 L10.6 1.4 M7.4 1.2 H10.8 V4.6" fill="none" stroke="#222" stroke-width="1.1" stroke-linecap="round" stroke-linejoin="round"/></svg>
<svg style="left:510.45px;top:777.45px" width="10.5" height="10.5" viewBox="0 0 10.5 10.5"><path d="M1 1 L9.5 9.5 M9.5 1 L1 9.5" fill="none" stroke="#151515" stroke-width="1.05"/></svg>
<div style="left:647.00px;top:352.50px;width:382.70px;height:71.70px;background:#fff;border:1px solid #7a7a7a;"></div>
<div style="left:647.00px;top:428.60px;width:382.70px;height:71.60px;background:#fff;border:1px solid #7a7a7a;"></div>
<div style="left:647.00px;top:504.60px;width:382.70px;height:71.60px;background:#f4f4f4;border:1px solid #7a7a7a;"></div>
<div style="left:647.00px;top:580.50px;width:382.70px;height:72.00px;background:#f4f4f4;border:1px solid #7a7a7a;"></div>
<div style="left:647.00px;top:656.50px;width:382.70px;height:72.00px;background:#f4f4f4;border:1px solid #7a7a7a;"></div>
<div style="left:647.00px;top:732.50px;width:382.70px;height:15.70px;background:#fff;border:1px solid #7a7a7a;"></div>
<div style="left:647.00px;top:753.30px;width:382.70px;height:15.40px;background:#fff;border:1px solid #7a7a7a;"></div>
<div style="left:647.00px;top:773.80px;width:382.70px;height:15.70px;background:#fff;border:1px solid #7a7a7a;"></div>
<span class="lb" style="top:731.30px;font-size:9.6px;line-height:14px;color:#0a0a0a;left:555.00px;transform-origin:0 50%;transform:scaleX(0.8806);">12345</span>
<span class="lb" style="top:751.50px;font-size:9.6px;line-height:14px;color:#0a0a0a;left:555.00px;transform-origin:0 50%;transform:scaleX(0.9311);">Exemplarnummer</span>
<span class="lb" style="top:771.20px;font-size:9.6px;line-height:14px;color:#0a0a0a;left:555.00px;transform-origin:0 50%;transform:scaleX(0.9406);">Anzahl Teile</span>
<svg style="left:1036.30px;top:386.50px" width="12" height="8" viewBox="0 0 12 8"><path d="M1 1.4 L6 6.3 L11 1.4" fill="none" stroke="#222" stroke-width="1.05"/></svg>
<svg style="left:1037.00px;top:535.50px" width="11" height="12" viewBox="0 0 11 12"><path d="M1.5 1.2 H9.5 V10.8 H2.7 Q1.5 10.8 1.5 9.6 Z" fill="none" stroke="#222" stroke-width="1.0" stroke-linecap="round" stroke-linejoin="round"/><path d="M1.6 8.6 H9.4" fill="none" stroke="#222" stroke-width="0.9" stroke-linecap="round" stroke-linejoin="round"/><rect x="3.3" y="3.2" width="4.4" height="3" fill="#222"/></svg>
<svg style="left:1057.35px;top:536.25px" width="10.5" height="10.5" viewBox="0 0 10.5 10.5"><path d="M1 1 L9.5 9.5 M9.5 1 L1 9.5" fill="none" stroke="#151515" stroke-width="1.05"/></svg>
<svg style="left:1036.30px;top:612.00px" width="12" height="12" viewBox="0 0 12 12"><path d="M6 1.2 V7.6" fill="none" stroke="#222" stroke-width="1.0" stroke-linecap="round" stroke-linejoin="round"/><path d="M4.9 6.4 L6 8 L7.1 6.4 Z" fill="#222"/><ellipse cx="6" cy="8.3" rx="4.7" ry="2.2" fill="none" stroke="#222" stroke-width="0.95" stroke-linecap="round" stroke-linejoin="round"/></svg>
<svg style="left:1036.30px;top:690.00px" width="12" height="8" viewBox="0 0 12 8"><path d="M1 1.4 L6 6.3 L11 1.4" fill="none" stroke="#222" stroke-width="1.05"/></svg>
<svg style="left:1057.35px;top:688.75px" width="10.5" height="10.5" viewBox="0 0 10.5 10.5"><path d="M1 1 L9.5 9.5 M9.5 1 L1 9.5" fill="none" stroke="#151515" stroke-width="1.05"/></svg>
<div style="left:1015.80px;top:800.00px;width:1.20px;height:12.50px;background:#d8d8d8;"></div>
<svg style="left:1021.10px;top:800.00px" width="13" height="13" viewBox="0 0 13 13"><circle cx="6.5" cy="6.5" r="5.3" fill="none" stroke="#3b7f3b" stroke-width="0.9" stroke-linecap="round" stroke-linejoin="round"/><path d="M3.8 6.6 L5.8 8.6 L9.4 4.8" fill="none" stroke="#3b7f3b" stroke-width="1.0" stroke-linecap="round" stroke-linejoin="round"/></svg>
<svg style="left:1039.60px;top:800.50px" width="12" height="12" viewBox="0 0 12 12"><circle cx="6" cy="2.9" r="2" fill="#1c1c1c"/><path d="M0.9 1 V4.4 Q1 7 3.8 7.6 M11.1 1 V4.4 Q11 7 8.2 7.6" fill="none" stroke="#1c1c1c" stroke-width="1.0" stroke-linecap="round" stroke-linejoin="round"/><path d="M3.8 6.6 H8.2 V11 H3.8 Z" fill="#1c1c1c" fill-opacity="0.55" stroke="#1c1c1c" stroke-width="0.9"/><path d="M6 8 V11" stroke="#f5f5f5" stroke-width="0.8"/></svg>
<svg style="left:1057.50px;top:800.50px" width="13" height="12" viewBox="0 0 13 12"><path d="M0.8 1.8 H7.4 V9 H0.8 Z M7.4 4 H10.2 L12.2 6.4 V9 H7.4" fill="none" stroke="#1c1c1c" stroke-width="0.9" stroke-linecap="round" stroke-linejoin="round"/><circle cx="3.2" cy="9.6" r="1.2" fill="#f5f5f5" stroke="#1c1c1c" stroke-width="0.9"/><circle cx="9.6" cy="9.6" r="1.2" fill="#f5f5f5" stroke="#1c1c1c" stroke-width="0.9"/></svg>
<svg style="left:1077.00px;top:800.50px" width="12" height="12" viewBox="0 0 12 12"><circle cx="6" cy="6" r="5.2" fill="#111"/><path d="M3.4 2.6 Q5.4 3.2 5 4.8 Q4.6 6 3 6.2 Q2.4 7.6 3.6 9 Q2 8 1.8 6 Q1.8 4 3.4 2.6 Z M7 6 Q8.6 5.6 9.4 6.8 Q9 8.8 7.4 9.6 Q6.6 8 7 6 Z M7.6 2 Q9 2.6 9.6 3.8 Q8.4 4.2 7.6 3.4 Z" fill="#f5f5f5"/></svg>
<div style="left:353.00px;top:204.00px;width:331.30px;height:520.00px;border:5px solid #ff0000;"></div>
<div style="left:363.00px;top:214.00px;width:319.30px;height:504.30px;background:#f5f5f5;border:1px solid #7c7c7c;border-bottom-color:#999;"></div>
<div style="left:364.00px;top:215.00px;width:319.30px;height:24.30px;background:#fff;"></div>
<span style="top:220.20px;font-size:9.9px;line-height:14px;color:#111;left:371.00px;transform-origin:0 50%;">Feldinformationen</span>
<span class="lb" style="top:238.00px;font-size:9.6px;line-height:14px;color:#0a0a0a;left:371.70px;transform-origin:0 50%;transform:scaleX(0.9513);">Steuerelement-N</span>
<div style="left:447.50px;top:239.40px;width:190.70px;height:15.30px;background:#fff;border:1px solid #0078d7;"></div>
<div style="left:451.30px;top:242.40px;width:75.60px;height:11.40px;background:#0078d7;"></div>
<span style="top:241.20px;font-size:10.2px;line-height:14px;color:#fff;left:452.00px;transform-origin:0 50%;transform:scaleX(0.9395);">fldBound_Core03</span>
<svg style="left:644.90px;top:243.10px" width="12" height="13" viewBox="0 0 12 13"><rect x="1.25" y="2.3" width="7.9" height="7.7" fill="none" stroke="#111" stroke-width="1.15" stroke-linecap="round" stroke-linejoin="round"/><path d="M3.6 2.3 Q3.6 0.8 5.2 0.8 Q6.8 0.8 6.8 2.3 Q6.8 3.6 5.2 3.6 Q3.6 3.6 3.6 2.3 Z" fill="#f5f5f5" stroke="#111" stroke-width="1.0"/><path d="M5.6 6.4 H7 M5.6 6.4 V8" fill="none" stroke="#555" stroke-width="0.9"/><path d="M10.6 6 V11.6 M5.2 11.5 H10.8" fill="none" stroke="#555" stroke-width="0.9" stroke-dasharray="1 0.8"/></svg>
<span class="lb" style="top:258.00px;font-size:9.6px;line-height:14px;color:#0a0a0a;left:371.70px;transform-origin:0 50%;transform:scaleX(0.9766);">Beschriftungen</span>
<div style="left:447.50px;top:258.80px;width:235.80px;height:45.80px;background:#fff;"></div>
<span class="lb" style="top:305.50px;font-size:9.6px;line-height:14px;color:#0a0a0a;left:371.70px;transform-origin:0 50%;transform:scaleX(1.0103);">Datenfeld</span>
<div style="left:447.50px;top:307.20px;width:190.70px;height:15.20px;background:#fff;border:1px solid #7a7a7a;"></div>
<span style="top:309.10px;font-size:10.2px;line-height:14px;color:#0a0a0a;left:452.30px;transform-origin:0 50%;transform:scaleX(0.9462);">ObjTitelOriginalS</span>
<span class="lb" style="top:326.10px;font-size:9.6px;line-height:14px;color:#0a0a0a;left:371.70px;transform-origin:0 50%;transform:scaleX(0.9538);">Tabelle</span>
<div style="left:447.50px;top:327.30px;width:190.70px;height:15.30px;background:#fff;border:1px solid #7a7a7a;"></div>
<span style="top:329.25px;font-size:10.2px;line-height:14px;color:#0a0a0a;left:452.30px;transform-origin:0 50%;transform:scaleX(0.9292);">ObjDaten</span>
<span class="lb" style="top:346.60px;font-size:9.6px;line-height:14px;color:#0a0a0a;left:371.70px;transform-origin:0 50%;transform:scaleX(0.9764);">Datentyp</span>
<div style="left:447.50px;top:347.60px;width:190.70px;height:15.40px;background:#fff;border:1px solid #7a7a7a;"></div>
<span style="top:349.60px;font-size:10.2px;line-height:14px;color:#0a0a0a;left:452.30px;transform-origin:0 50%;transform:scaleX(0.9111);">String (200)</span>
<span class="lb" style="top:366.70px;font-size:9.6px;line-height:14px;color:#0a0a0a;left:371.70px;transform-origin:0 50%;transform:scaleX(0.9843);">Vokabular</span>
<div style="left:447.50px;top:367.80px;width:190.70px;height:15.50px;background:#f4f4f4;border:1px solid #7a7a7a;"></div>
<span style="top:369.85px;font-size:10.2px;line-height:14px;color:#0a0a0a;left:452.30px;transform-origin:0 50%;transform:scaleX(0.9462);">ObjTitelOriginalS</span>
<svg style="left:644.90px;top:310.50px" width="12" height="13" viewBox="0 0 12 13"><rect x="1.25" y="2.3" width="7.9" height="7.7" fill="none" stroke="#111" stroke-width="1.15" stroke-linecap="round" stroke-linejoin="round"/><path d="M3.6 2.3 Q3.6 0.8 5.2 0.8 Q6.8 0.8 6.8 2.3 Q6.8 3.6 5.2 3.6 Q3.6 3.6 3.6 2.3 Z" fill="#f5f5f5" stroke="#111" stroke-width="1.0"/><path d="M5.6 6.4 H7 M5.6 6.4 V8" fill="none" stroke="#555" stroke-width="0.9"/><path d="M10.6 6 V11.6 M5.2 11.5 H10.8" fill="none" stroke="#555" stroke-width="0.9" stroke-dasharray="1 0.8"/></svg>
<div style="left:364.00px;top:388.00px;width:319.30px;height:3.20px;background:#fbfbfb;"></div>
<div style="left:364.00px;top:391.10px;width:319.30px;height:20.50px;background:#dce6f2;"></div>
<span class="i" style="top:394.80px;font-size:9.2px;line-height:14px;color:#111;left:367.00px;transform-origin:0 50%;transform:scaleX(0.9158);">Verwendete Begriffe / Indexliste</span>
<div style="left:491.40px;top:395.00px;width:1.00px;height:12.50px;background:#c3cede;"></div>
<span style="top:394.80px;font-size:10.2px;line-height:14px;color:#0a0a0a;left:496.70px;transform-origin:0 50%;transform:scaleX(0.8985);">Einträge:  106</span>
<div style="left:643.40px;top:395.00px;width:1.00px;height:12.50px;background:#c3cede;"></div>
<svg style="left:649.00px;top:395.50px" width="12" height="13" viewBox="0 0 12 13"><rect x="1.25" y="2.3" width="7.9" height="7.7" fill="none" stroke="#111" stroke-width="1.15" stroke-linecap="round" stroke-linejoin="round"/><path d="M3.6 2.3 Q3.6 0.8 5.2 0.8 Q6.8 0.8 6.8 2.3 Q6.8 3.6 5.2 3.6 Q3.6 3.6 3.6 2.3 Z" fill="#f5f5f5" stroke="#111" stroke-width="1.0"/><path d="M5.6 6.4 H7 M5.6 6.4 V8" fill="none" stroke="#555" stroke-width="0.9"/><path d="M10.6 6 V11.6 M5.2 11.5 H10.8" fill="none" stroke="#555" stroke-width="0.9" stroke-dasharray="1 0.8"/></svg>
<svg style="left:667.30px;top:395.20px" width="12" height="12" viewBox="0 0 12 12"><path d="M6 2.6 H2.6 Q1.4 2.6 1.4 3.8 V9.6 Q1.4 10.8 2.6 10.8 H8.4 Q9.6 10.8 9.6 9.6 V6.4" fill="none" stroke="#222" stroke-width="1.0" stroke-linecap="round" stroke-linejoin="round"/><path d="M5.2 7 L10.6 1.4 M7.4 1.2 H10.8 V4.6" fill="none" stroke="#222" stroke-width="1.1" stroke-linecap="round" stroke-linejoin="round"/></svg>
<div style="left:364.00px;top:411.60px;width:306.30px;height:279.40px;background:#fff;"></div>
<div style="left:573.00px;top:411.60px;width:1.00px;height:20.00px;background:#e6e6e6;"></div>
<div style="left:654.80px;top:411.60px;width:1.00px;height:20.00px;background:#e6e6e6;"></div>
<span style="top:414.60px;font-size:10.2px;line-height:14px;color:#0a0a0a;left:369.50px;transform-origin:0 50%;transform:scaleX(0.9397);">Begriff</span>
<span style="top:414.60px;font-size:10.2px;line-height:14px;color:#0a0a0a;right:449.70px;transform-origin:100% 50%;transform:scaleX(0.9124);">Anzahl Datens...</span>
<div style="left:367.70px;top:431.60px;width:287.20px;height:15.36px;background:#e8f0fa;"></div>
<span style="top:433.10px;font-size:10.2px;line-height:14px;color:#0a0a0a;left:369.50px;transform-origin:0 50%;transform:scaleX(0.9367);">30th November. Sketch</span>
<span style="top:433.10px;font-size:10.2px;line-height:14px;color:#0a0a0a;right:450.40px;transform-origin:100% 50%;">1</span>
<span style="top:448.46px;font-size:10.2px;line-height:14px;color:#0a0a0a;left:369.50px;transform-origin:0 50%;transform:scaleX(0.9126);">A Battle Scene</span>
<span style="top:448.46px;font-size:10.2px;line-height:14px;color:#0a0a0a;right:450.40px;transform-origin:100% 50%;">1</span>
<div style="left:367.70px;top:462.32px;width:287.20px;height:15.36px;background:#e8f0fa;"></div>
<span style="top:463.82px;font-size:10.2px;line-height:14px;color:#0a0a0a;left:369.50px;transform-origin:0 50%;transform:scaleX(0.9060);">A Bavarian Peasant Girl</span>
<span style="top:463.82px;font-size:10.2px;line-height:14px;color:#0a0a0a;right:450.40px;transform-origin:100% 50%;">1</span>
<span style="top:479.18px;font-size:10.2px;line-height:14px;color:#0a0a0a;left:369.50px;transform-origin:0 50%;transform:scaleX(0.9394);">A Boy Playing the Lute</span>
<span style="top:479.18px;font-size:10.2px;line-height:14px;color:#0a0a0a;right:450.40px;transform-origin:100% 50%;">1</span>
<div style="left:367.70px;top:493.04px;width:287.20px;height:15.36px;background:#e8f0fa;"></div>
<span style="top:494.54px;font-size:10.2px;line-height:14px;color:#0a0a0a;left:369.50px;transform-origin:0 50%;transform:scaleX(0.9203);">A Card Game</span>
<span style="top:494.54px;font-size:10.2px;line-height:14px;color:#0a0a0a;right:450.40px;transform-origin:100% 50%;">1</span>
<span style="top:509.90px;font-size:10.2px;line-height:14px;color:#0a0a0a;left:369.50px;transform-origin:0 50%;transform:scaleX(0.9100);">A Classical Poet</span>
<span style="top:509.90px;font-size:10.2px;line-height:14px;color:#0a0a0a;right:450.40px;transform-origin:100% 50%;">1</span>
<div style="left:367.70px;top:523.76px;width:287.20px;height:15.36px;background:#e8f0fa;"></div>
<span style="top:525.26px;font-size:10.2px;line-height:14px;color:#0a0a0a;left:369.50px;transform-origin:0 50%;transform:scaleX(0.9260);">A Girl&#x27;s Head I</span>
<span style="top:525.26px;font-size:10.2px;line-height:14px;color:#0a0a0a;right:450.40px;transform-origin:100% 50%;">1</span>
<span style="top:540.62px;font-size:10.2px;line-height:14px;color:#0a0a0a;left:369.50px;transform-origin:0 50%;transform:scaleX(0.9125);">A Parisian Lady</span>
<span style="top:540.62px;font-size:10.2px;line-height:14px;color:#0a0a0a;right:450.40px;transform-origin:100% 50%;">1</span>
<div style="left:367.70px;top:554.48px;width:287.20px;height:15.36px;background:#e8f0fa;"></div>
<span style="top:555.98px;font-size:10.2px;line-height:14px;color:#0a0a0a;left:369.50px;transform-origin:0 50%;transform:scaleX(0.9407);">Abendandacht_im_Walde</span>
<span style="top:555.98px;font-size:10.2px;line-height:14px;color:#0a0a0a;right:450.40px;transform-origin:100% 50%;">1</span>
<span style="top:571.34px;font-size:10.2px;line-height:14px;color:#0a0a0a;left:369.50px;transform-origin:0 50%;transform:scaleX(0.9404);">Abendgesellschaft</span>
<span style="top:571.34px;font-size:10.2px;line-height:14px;color:#0a0a0a;right:450.40px;transform-origin:100% 50%;">1</span>
<div style="left:367.70px;top:585.20px;width:287.20px;height:15.36px;background:#e8f0fa;"></div>
<span style="top:586.70px;font-size:10.2px;line-height:14px;color:#0a0a0a;left:369.50px;transform-origin:0 50%;transform:scaleX(0.9147);">Amor als Sieger</span>
<span style="top:586.70px;font-size:10.2px;line-height:14px;color:#0a0a0a;right:450.40px;transform-origin:100% 50%;">1</span>
<span style="top:602.06px;font-size:10.2px;line-height:14px;color:#0a0a0a;left:369.50px;transform-origin:0 50%;transform:scaleX(0.9271);">Ansicht des Kanals Saint-Martin in Paris</span>
<span style="top:602.06px;font-size:10.2px;line-height:14px;color:#0a0a0a;right:450.40px;transform-origin:100% 50%;">1</span>
<div style="left:367.70px;top:615.92px;width:287.20px;height:15.36px;background:#e8f0fa;"></div>
<span style="top:617.42px;font-size:10.2px;line-height:14px;color:#0a0a0a;left:369.50px;transform-origin:0 50%;transform:scaleX(0.8916);">Atari 600 XL</span>
<span style="top:617.42px;font-size:10.2px;line-height:14px;color:#0a0a0a;right:450.40px;transform-origin:100% 50%;">1</span>
<span style="top:632.78px;font-size:10.2px;line-height:14px;color:#0a0a0a;left:369.50px;transform-origin:0 50%;transform:scaleX(0.9318);">Auf der Schaukel</span>
<span style="top:632.78px;font-size:10.2px;line-height:14px;color:#0a0a0a;right:450.40px;transform-origin:100% 50%;">1</span>
<div style="left:367.70px;top:646.64px;width:287.20px;height:15.36px;background:#e8f0fa;"></div>
<span style="top:648.14px;font-size:10.2px;line-height:14px;color:#0a0a0a;left:369.50px;transform-origin:0 50%;transform:scaleX(0.9659);">Auf und ab</span>
<span style="top:648.14px;font-size:10.2px;line-height:14px;color:#0a0a0a;right:450.40px;transform-origin:100% 50%;">1</span>
<span style="top:663.50px;font-size:10.2px;line-height:14px;color:#0a0a0a;left:369.50px;transform-origin:0 50%;transform:scaleX(0.9185);">Badeplatz in Asnières</span>
<span style="top:663.50px;font-size:10.2px;line-height:14px;color:#0a0a0a;right:450.40px;transform-origin:100% 50%;">1</span>
<div style="left:367.70px;top:677.36px;width:287.20px;height:13.64px;background:#e8f0fa;"></div>
<span style="top:678.86px;font-size:10.2px;line-height:14px;color:#0a0a0a;left:369.50px;transform-origin:0 50%;transform:scaleX(0.9303);">Bauernhaus in Ober-Österreich</span>
<span style="top:678.86px;font-size:10.2px;line-height:14px;color:#0a0a0a;right:450.40px;transform-origin:100% 50%;">1</span>
<div style="left:670.30px;top:411.60px;width:12.20px;height:279.40px;background:#f0f0f0;"></div>
<div style="left:670.50px;top:426.70px;width:11.60px;height:37.20px;background:#cdcdcd;"></div>
<svg style="left:672px;top:416.5px" width="9" height="7" viewBox="0 0 9 7"><path d="M1 5.2 L4.5 1.6 L8 5.2" fill="none" stroke="#505050" stroke-width="1.4"/></svg>
<svg style="left:672px;top:681px" width="9" height="7" viewBox="0 0 9 7"><path d="M1 1.6 L4.5 5.2 L8 1.6" fill="none" stroke="#505050" stroke-width="1.4"/></svg>
<div style="left:597.50px;top:696.30px;width:78.10px;height:15.20px;background:#fff;border:1px solid #dedede;"></div>
<span style="top:698.90px;font-size:10.2px;line-height:14px;color:#0a0a0a;left:603.90px;transform-origin:0 50%;transform:scaleX(0.8717);">Schließen</span>
</div>
</body></html>
